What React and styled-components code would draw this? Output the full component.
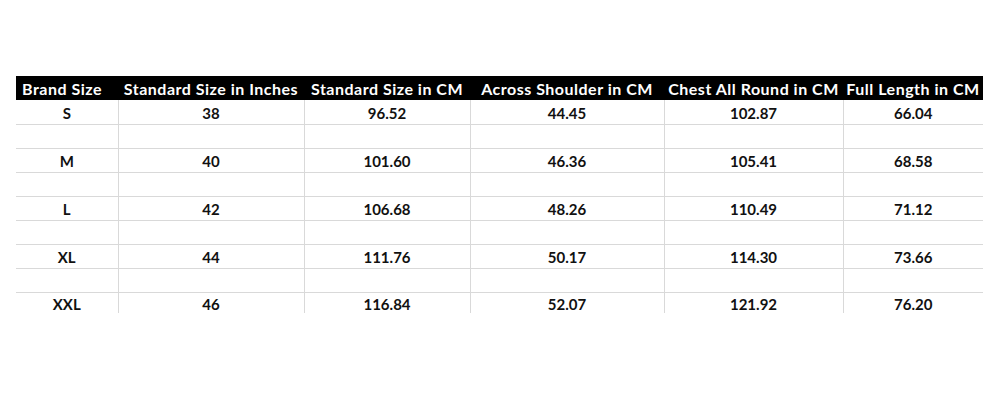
import React from "react";
import styled, { createGlobalStyle } from "styled-components";

const GlobalStyle = createGlobalStyle`
    body {
        margin: 0;
        background: #ffffff;
        font-family: Lato, "Liberation Sans", sans-serif;
    }
`;

const columns = [
    { title: "Brand Size", width: 102 },
    { title: "Standard Size in Inches", width: 186 },
    { title: "Standard Size in CM", width: 166 },
    { title: "Across Shoulder in CM", width: 194 },
    { title: "Chest All Round in CM", width: 179 },
    { title: "Full Length in CM", width: 140 },
];

const sizes = [
    ["S", "38", "96.52", "44.45", "102.87", "66.04"],
    ["M", "40", "101.60", "46.36", "105.41", "68.58"],
    ["L", "42", "106.68", "48.26", "110.49", "71.12"],
    ["XL", "44", "111.76", "50.17", "114.30", "73.66"],
    ["XXL", "46", "116.84", "52.07", "121.92", "76.20"],
];

const App = () => {
    // every size row is followed by an empty spacer row, except the last
    const rows = [];
    sizes.forEach((row, i) => {
        rows.push(row);
        if (i < sizes.length - 1) rows.push(null);
    });

    return (
        <>
            <GlobalStyle />
            <Page>
                <Chart>
                    <colgroup>
                        {columns.map((c) => (
                            <col key={c.title} style={{ width: c.width }} />
                        ))}
                    </colgroup>
                    <thead>
                        <tr>
                            {columns.map((c, j) => (
                                <HeadCell key={c.title} $first={j === 0}>
                                    {c.title}
                                </HeadCell>
                            ))}
                        </tr>
                    </thead>
                    <tbody>
                        {rows.map((row, i) => (
                            <tr key={i}>
                                {columns.map((c, j) => (
                                    <Cell key={c.title} $last={i === rows.length - 1}>
                                        {row ? row[j] : ""}
                                    </Cell>
                                ))}
                            </tr>
                        ))}
                    </tbody>
                </Chart>
            </Page>
        </>
    );
};

const Page = styled.div`
    width: 1000px;
    height: 400px;
    padding: 76px 0 0 16px;
    box-sizing: border-box;
`;

const Chart = styled.table`
    border-collapse: collapse;
    table-layout: fixed;
    width: 967px;
`;

const HeadCell = styled.th`
    background: #000000;
    color: #ffffff;
    font-weight: 700;
    font-size: 16px;
    letter-spacing: 0.5px;
    line-height: 18px;
    height: 24px;
    padding: 1px ${(p) => (p.$first ? "10px" : "0")} 0 0;
    text-align: center;
    white-space: nowrap;
    box-sizing: border-box;
`;

const Cell = styled.td`
    height: ${(p) => (p.$last ? "21px" : "24px")};
    padding: 2px 0 0;
    box-sizing: border-box;
    text-align: center;
    font-weight: 700;
    font-size: 15px;
    line-height: 16px;
    color: #111111;
    border-bottom: ${(p) => (p.$last ? "none" : "1px solid #d9d9d9")};
    border-left: 1px solid #d9d9d9;

    &:first-child {
        border-left: none;
    }
`;

export default App;
